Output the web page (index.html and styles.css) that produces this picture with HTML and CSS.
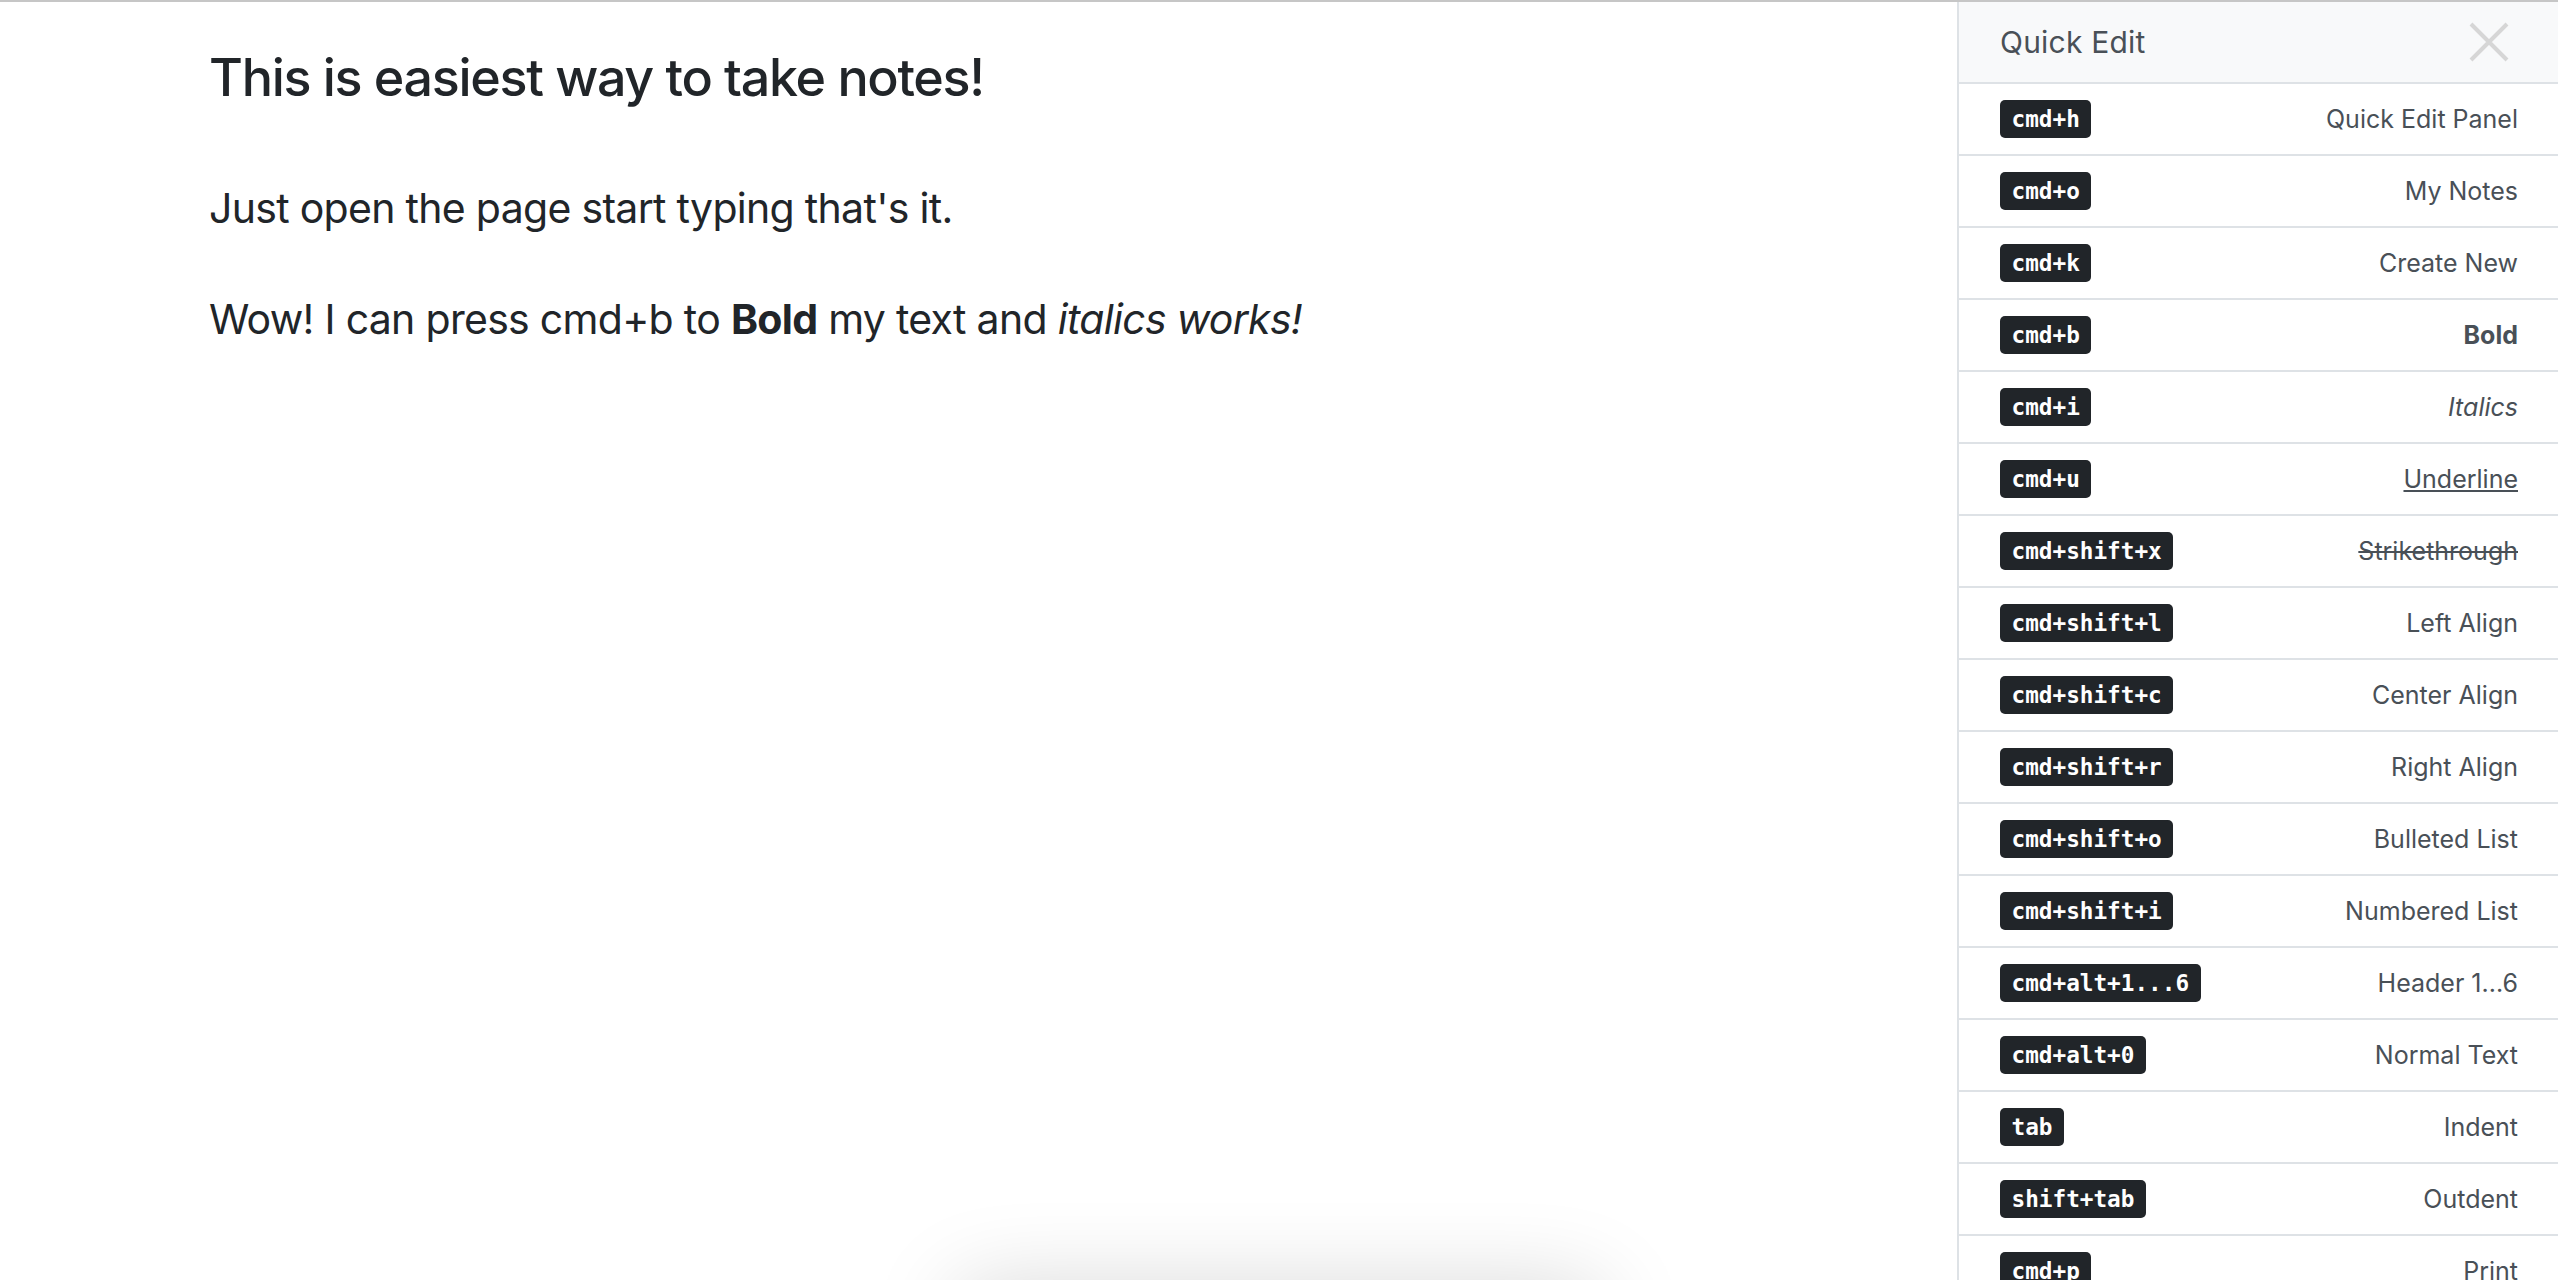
FILE: index.html
```html
<!DOCTYPE html>
<html lang="en">
<head>
    <meta charset="UTF-8">
    <meta name="viewport" content="width=device-width, initial-scale=1.0">
    <title>Quick Notes</title>
    <link rel="stylesheet" href="styles.css">
</head>
<body>

<div class="page">
    <main class="editor" contenteditable="true">
        <h1 class="note-title">This is easiest way to take notes!</h1>
        <p>Just open the page start typing that's it.</p>
        <p>Wow! I can press cmd+b to <b>Bold</b> my text and <i>italics works!</i></p>
    </main>

    <aside class="quick-edit">
        <div class="quick-edit-header">
            <span class="quick-edit-title">Quick Edit</span>
            <button class="close-btn" type="button" aria-label="Close">
                <svg width="42" height="40" viewBox="0 0 42 40">
                    <path d="M3 2 L39 38 M39 2 L3 38" stroke="#d6d6d6" stroke-width="4" fill="none"/>
                </svg>
            </button>
        </div>
        <ul class="shortcut-list">
            <li><kbd>cmd+h</kbd><span>Quick Edit Panel</span></li>
            <li><kbd>cmd+o</kbd><span>My Notes</span></li>
            <li><kbd>cmd+k</kbd><span>Create New</span></li>
            <li><kbd>cmd+b</kbd><span><b>Bold</b></span></li>
            <li><kbd>cmd+i</kbd><span><i>Italics</i></span></li>
            <li><kbd>cmd+u</kbd><span><u>Underline</u></span></li>
            <li><kbd>cmd+shift+x</kbd><span><s>Strikethrough</s></span></li>
            <li><kbd>cmd+shift+l</kbd><span>Left Align</span></li>
            <li><kbd>cmd+shift+c</kbd><span>Center Align</span></li>
            <li><kbd>cmd+shift+r</kbd><span>Right Align</span></li>
            <li><kbd>cmd+shift+o</kbd><span>Bulleted List</span></li>
            <li><kbd>cmd+shift+i</kbd><span>Numbered List</span></li>
            <li><kbd>cmd+alt+1...6</kbd><span>Header 1...6</span></li>
            <li><kbd>cmd+alt+0</kbd><span>Normal Text</span></li>
            <li><kbd>tab</kbd><span>Indent</span></li>
            <li><kbd>shift+tab</kbd><span>Outdent</span></li>
            <li><kbd>cmd+p</kbd><span>Print</span></li>
        </ul>
    </aside>
</div>

<div class="toolbar"></div>

</body>
</html>
```

FILE: styles.css
```css
html, body {
    height: 100%;
}

body {
    margin: 0;
    font-family: Inter, "Noto Sans", sans-serif;
    color: #212529;
    background-color: #fff;
    border-top: 2px solid #c6c6c6;
    box-sizing: border-box;
    overflow: hidden;
}

.page {
    display: flex;
    height: 100%;
}

.editor {
    flex: 1;
    padding: 45px 0 0 209px;
    outline: none;
}

.note-title {
    margin: 0 0 69px;
    font-size: 52px;
    font-weight: 500;
    line-height: 1.2;
    letter-spacing: -1.3px;
}

.editor p {
    margin: 0 0 49px;
    font-size: 41px;
    line-height: 1.5;
    letter-spacing: -0.7px;
}

/* side panel */
.quick-edit {
    width: 601px;
    flex-shrink: 0;
    box-sizing: border-box;
    border-left: 2px solid #dee2e6;
    overflow: hidden;
}

.quick-edit-header {
    display: flex;
    justify-content: space-between;
    align-items: center;
    height: 80px;
    padding: 0 40px 0 41px;
    background-color: #f8f9fa;
    border-bottom: 2px solid #dee2e6;
}

.quick-edit-title {
    font-size: 30px;
    color: #495057;
    letter-spacing: 0.2px;
}

.close-btn {
    background: none;
    border: none;
    padding: 0;
    margin-right: 8px;
    display: flex;
    cursor: pointer;
}

.shortcut-list {
    list-style: none;
    margin: 0;
    padding: 0;
}

.shortcut-list li {
    display: flex;
    justify-content: space-between;
    align-items: center;
    height: 70px;
    padding: 0 40px 0 41px;
    border-bottom: 2px solid #dee2e6;
    font-size: 25px;
    color: #495057;
}

kbd {
    font-family: "DejaVu Sans Mono", monospace;
    font-size: 22.7px;
    font-weight: bold;
    line-height: 28px;
    padding: 5px 11.5px;
    color: #fff;
    background-color: #212529;
    border-radius: 5px;
}

/* bottom toolbar, sitting just under the fold */
.toolbar {
    position: fixed;
    left: 50%;
    bottom: -90px;
    width: 640px;
    height: 80px;
    margin-left: -320px;
    background-color: #fff;
    border-radius: 12px;
    box-shadow: 0 0 90px rgba(0, 0, 0, 0.18);
}
```
